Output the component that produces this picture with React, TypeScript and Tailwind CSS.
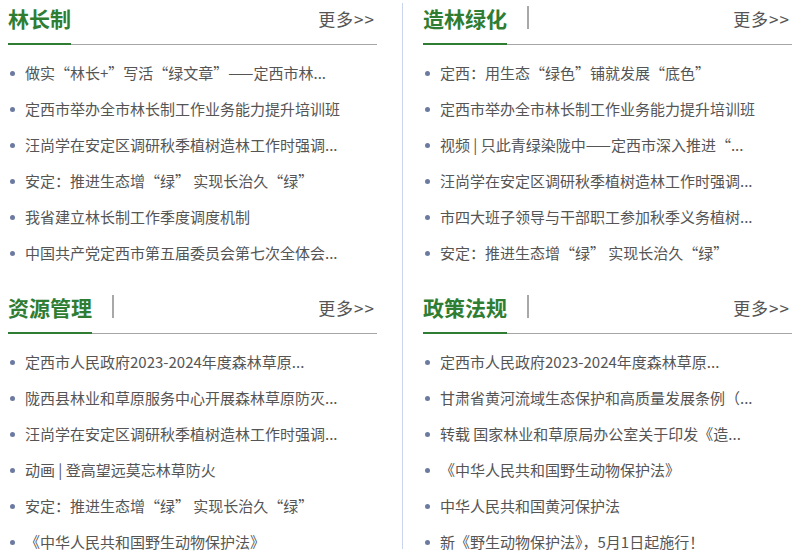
import React from 'react';

type Section = {
  title: string;
  divider: boolean;
  items: string[];
};

const leftSections: Section[] = [
  {
    title: '林长制',
    divider: false,
    items: [
      '做实“林长+”写活“绿文章”——定西市林...',
      '定西市举办全市林长制工作业务能力提升培训班',
      '汪尚学在安定区调研秋季植树造林工作时强调...',
      '安定：推进生态增“绿” 实现长治久“绿”',
      '我省建立林长制工作季度调度机制',
      '中国共产党定西市第五届委员会第七次全体会...',
    ],
  },
  {
    title: '资源管理',
    divider: true,
    items: [
      '定西市人民政府2023-2024年度森林草原...',
      '陇西县林业和草原服务中心开展森林草原防灭...',
      '汪尚学在安定区调研秋季植树造林工作时强调...',
      '动画 | 登高望远莫忘林草防火',
      '安定：推进生态增“绿” 实现长治久“绿”',
      '《中华人民共和国野生动物保护法》',
    ],
  },
];

const rightSections: Section[] = [
  {
    title: '造林绿化',
    divider: true,
    items: [
      '定西：用生态“绿色”铺就发展“底色”',
      '定西市举办全市林长制工作业务能力提升培训班',
      '视频 | 只此青绿染陇中——定西市深入推进“...',
      '汪尚学在安定区调研秋季植树造林工作时强调...',
      '市四大班子领导与干部职工参加秋季义务植树...',
      '安定：推进生态增“绿” 实现长治久“绿”',
    ],
  },
  {
    title: '政策法规',
    divider: true,
    items: [
      '定西市人民政府2023-2024年度森林草原...',
      '甘肃省黄河流域生态保护和高质量发展条例（...',
      '转载 国家林业和草原局办公室关于印发《造...',
      '《中华人民共和国野生动物保护法》',
      '中华人民共和国黄河保护法',
      '新《野生动物保护法》，5月1日起施行！',
    ],
  },
];

const NewsBlock: React.FC<{ section: Section }> = ({ section }) => (
  <div className="mb-[18px]">
    {/* header: title with green underline, grey rule, more link */}
    <div className="flex items-start justify-between h-[45px] border-b border-[#a6a6a6]">
      <div className="flex items-start h-full">
        <div className="relative h-full">
          <h2 className="pt-[7px] text-[21px] leading-[22px] font-bold text-[#2e7d32]">{section.title}</h2>
          <span className="absolute left-0 right-0 bottom-[-1px] h-[2px] bg-[#2e7d32]" />
        </div>
        {section.divider && <span className="ml-5 mt-[6px] w-[2px] h-[23px] bg-[#a8a8a8]" />}
      </div>
      <a className="mt-[8px] mr-[2px] text-[17px] leading-[22px] tracking-[1px] text-[#555]">更多&gt;&gt;</a>
    </div>

    <ul className="mt-[10px]">
      {section.items.map((item, i) => (
        <li key={i} className="flex items-center h-[36px] pl-[2px]">
          <span className="w-[5px] h-[5px] rounded-full bg-[#6b7ba0] shrink-0" />
          <span className="ml-[10px] text-[15px] text-[#555] whitespace-nowrap">{item}</span>
        </li>
      ))}
    </ul>
  </div>
);

export default function App() {
  return (
    <div className="w-[808px] h-[558px] overflow-hidden bg-white font-['Noto_Sans_CJK_SC','Microsoft_YaHei',sans-serif]">
      <div className="flex items-start px-2">
        <div className="w-[369px]">
          {leftSections.map((s) => (
            <NewsBlock key={s.title} section={s} />
          ))}
        </div>
        <div className="ml-[25px] mt-[3px] w-px h-[546px] bg-[#c8d5ea]" />
        <div className="ml-5 w-[369px]">
          {rightSections.map((s) => (
            <NewsBlock key={s.title} section={s} />
          ))}
        </div>
      </div>
    </div>
  );
}
